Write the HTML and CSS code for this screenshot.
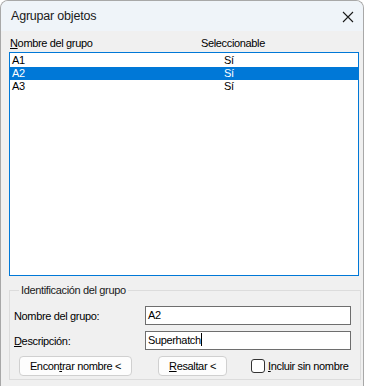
FILE: index.html
```html
<!DOCTYPE html>
<html lang="es">

<head>
    <meta charset="UTF-8">
    <title>Agrupar objetos</title>
    <link rel="stylesheet" href="styles.css">
</head>

<body>
    <div class="window">
        <div class="titlebar">
            <span class="title">Agrupar objetos</span>
            <svg class="close" width="12" height="12" viewBox="0 0 12 12">
                <path d="M1 1 L11 11 M11 1 L1 11" stroke="#1b1b1b" stroke-width="1.1" fill="none" />
            </svg>
        </div>

        <div class="content">
            <div class="headers">
                <span class="col-name"><u>N</u>ombre del grupo</span>
                <span class="col-sel">Seleccionable</span>
            </div>

            <!-- group list -->
            <div class="listbox">
                <div class="row"><span class="col-name">A1</span><span class="col-val">Sí</span></div>
                <div class="row selected"><span class="col-name">A2</span><span class="col-val">Sí</span></div>
                <div class="row"><span class="col-name">A3</span><span class="col-val">Sí</span></div>
            </div>

            <fieldset class="group">
                <legend>Identificación del grupo</legend>
                <div class="field">
                    <label>Nombre del <u>g</u>rupo:</label>
                    <div class="input">A2</div>
                </div>
                <div class="field">
                    <label><u>D</u>escripción:</label>
                    <div class="input">Superhatch<span class="caret"></span></div>
                </div>
                <div class="actions">
                    <button class="btn btn-find">Encon<u>t</u>rar nombre &lt;</button>
                    <button class="btn btn-mark"><u>R</u>esaltar &lt;</button>
                    <span class="check"><span class="box"></span><u>I</u>ncluir sin nombre</span>
                </div>
            </fieldset>
        </div>
    </div>
</body>

</html>
```

FILE: styles.css
```css
body {
    margin: 0;
    background: #ffffff;
    font-family: "Liberation Sans", Arial, sans-serif;
    font-size: 11px;
    letter-spacing: -0.35px;
    color: #000;
}

u {
    text-decoration: underline;
    text-underline-offset: 1px;
}

.window {
    width: 362px;
    height: 386px;
    border: 1px solid #a8a8a8;
    border-bottom: none;
    border-radius: 8px 8px 0 0;
    background: #f0f0f0;
    overflow: hidden;
}

.titlebar {
    height: 30px;
    background: #eff4f9;
    display: flex;
    align-items: center;
    justify-content: space-between;
    padding: 0 9px 0 10px;
}

.title {
    font-size: 12.5px;
    letter-spacing: -0.2px;
    color: #1a1a1a;
}

.close {
    margin-top: 1px;
}

.content {
    padding: 0 3px 0 8px;
}

.headers {
    height: 21px;
    display: flex;
    align-items: center;
    padding-top: 2px;
    box-sizing: border-box;
}

.headers .col-name {
    width: 191px;
    padding-left: 1px;
}

.listbox {
    width: 348px;
    height: 221px;
    border: 1px solid #0078d7;
    background: #fff;
    padding-top: 1px;
}

.row {
    height: 13px;
    line-height: 13px;
    display: flex;
}

.row .col-name {
    width: 212px;
    padding-left: 2px;
}

.row.selected {
    background: #0078d7;
    color: #fff;
}

.group {
    margin: 8px 0 0 0;
    width: 350px;
    height: 96px;
    box-sizing: border-box;
    border: 1px solid #dcdcdc;
    padding: 10px 9px 0 4px;
}

.group legend {
    margin-left: 5px;
    padding: 0 2px;
    color: #1a1a1a;
}

.field {
    display: flex;
    align-items: center;
    margin-bottom: 6px;
}

.field label {
    width: 131px;
}

.input {
    width: 202px;
    height: 17px;
    line-height: 17px;
    border: 1px solid #6e6e6e;
    background: #fff;
    padding-left: 2px;
}

.caret {
    display: inline-block;
    width: 1px;
    height: 13px;
    background: #000;
    vertical-align: -2px;
}

.actions {
    display: flex;
    align-items: center;
}

.btn {
    font-family: inherit;
    font-size: 11px;
    letter-spacing: -0.35px;
    height: 20px;
    background: #fdfdfd;
    border: 1px solid #d0d0d0;
    border-radius: 4px;
    padding: 0;
    color: #000;
}

.btn-find {
    width: 113px;
    margin-left: 5px;
}

.btn-mark {
    width: 69px;
    margin-left: 26px;
}

.check {
    display: flex;
    align-items: center;
    white-space: nowrap;
    margin-left: 24px;
}

.box {
    width: 12px;
    height: 12px;
    border: 1px solid #333;
    border-radius: 3px;
    background: #fff;
    margin-right: 3px;
}
```
